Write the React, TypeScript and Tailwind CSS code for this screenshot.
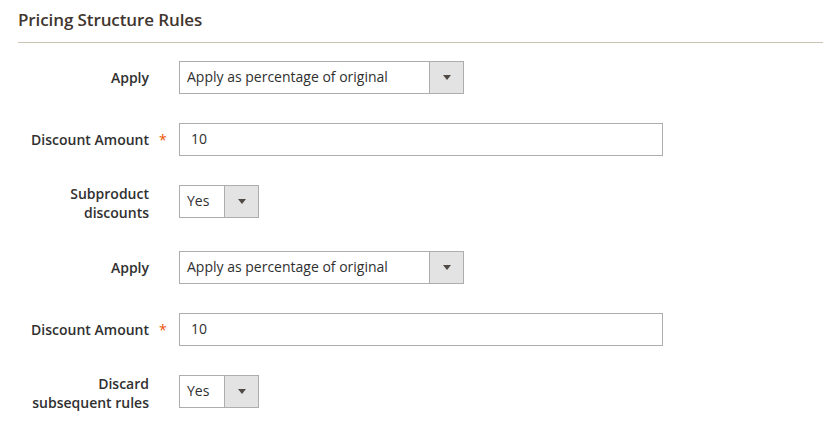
import React from 'react';

type Row =
  | { kind: 'select'; label: string[]; value: string; wide: boolean; required?: boolean }
  | { kind: 'input'; label: string[]; value: string; required?: boolean };

const ROWS: Row[] = [
  { kind: 'select', label: ['Apply'], value: 'Apply as percentage of original', wide: true },
  { kind: 'input', label: ['Discount Amount'], value: '10', required: true },
  { kind: 'select', label: ['Subproduct', 'discounts'], value: 'Yes', wide: false },
  { kind: 'select', label: ['Apply'], value: 'Apply as percentage of original', wide: true },
  { kind: 'input', label: ['Discount Amount'], value: '10', required: true },
  { kind: 'select', label: ['Discard', 'subsequent rules'], value: 'Yes', wide: false },
];

const Select: React.FC<{ value: string; wide: boolean }> = ({ value, wide }) => (
  <div
    className={`flex h-[33px] border border-[#adadad] bg-white ${wide ? 'w-[285px]' : 'w-[80px]'}`}
  >
    <span className="flex-1 pl-[7px] text-[14px] leading-[29px] text-[#303030] whitespace-nowrap overflow-hidden">
      {value}
    </span>
    <span className="w-[34px] shrink-0 flex items-center justify-center bg-[#e3e3e3] border-l border-[#adadad]">
      <svg width="8" height="5" viewBox="0 0 8 5">
        <path d="M0 0 H8 L4 5 Z" fill="#514943" />
      </svg>
    </span>
  </div>
);

const TextInput: React.FC<{ value: string }> = ({ value }) => (
  <div className="h-[33px] w-[484px] border border-[#adadad] bg-white pl-[11px] text-[14px] leading-[30px] text-[#303030]">
    {value}
  </div>
);

const App: React.FC = () => {
  return (
    <div className="min-h-[433px] bg-white pl-[18px] pr-[16px] pt-[8px] font-['Open_Sans',sans-serif]">
      <h2 className="text-[17px] font-semibold leading-[23px] tracking-[-0.1px] text-[#41362f] pb-[11px] border-b border-[#cac3b4]">
        Pricing Structure Rules
      </h2>

      <div className="mt-[18px] flex flex-col">
        {ROWS.map((row, i) => {
          const multi = row.label.length > 1;
          return (
            <div key={i} className="grid grid-cols-[131px_30px_1fr] mb-[29px]">
              <label
                className={`text-right text-[14px] font-semibold leading-[19px] text-[#303030] ${
                  multi ? 'mt-[-1px]' : 'pt-[7px]'
                }`}
              >
                {row.label.map((l, j) => (
                  <div key={j}>{l}</div>
                ))}
              </label>
              <span className="pl-[10px] pt-[7px] text-[14px] leading-[19px] text-[#eb5202]">
                {row.required ? '*' : ''}
              </span>
              <div>
                {row.kind === 'select' ? (
                  <Select value={row.value} wide={row.wide} />
                ) : (
                  <TextInput value={row.value} />
                )}
              </div>
            </div>
          );
        })}
      </div>
    </div>
  );
};

export default App;
